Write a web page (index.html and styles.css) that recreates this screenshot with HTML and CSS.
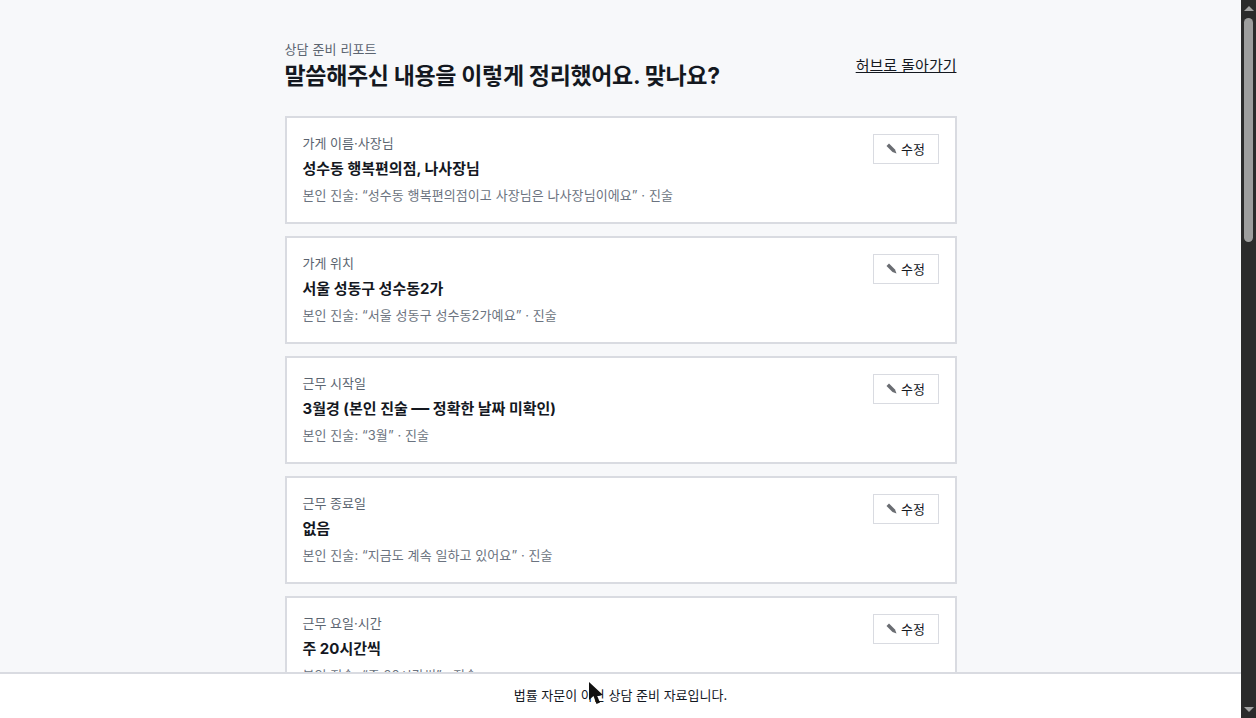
FILE: index.html
```html
<!DOCTYPE html>
<html lang="ko">
<head>
  <meta charset="UTF-8" />
  <meta name="viewport" content="width=device-width, initial-scale=1.0"/>
  <title>상담 준비 리포트</title>
  <link rel="stylesheet" href="styles.css">
</head>
<body>

  <svg width="0" height="0" class="defs">
    <symbol id="pencil" viewBox="0 0 11 11">
      <path d="M0.5 3 L3 0.5 L9 6.5 L10.5 10.5 L6.5 9 Z" fill="#6a6d72"/>
    </symbol>
  </svg>

  <div class="window">
    <div class="view">
      <main class="page">
        <header class="page-head">
          <div>
            <div class="eyebrow">상담 준비 리포트</div>
            <h1 class="title">말씀해주신 내용을 이렇게 정리했어요. 맞나요?</h1>
          </div>
          <a class="back-link" href="#">허브로 돌아가기</a>
        </header>

        <section class="card">
          <div class="card-body">
            <div class="card-label">가게 이름·사장님</div>
            <div class="card-value">성수동 행복편의점, 나사장님</div>
            <div class="card-source">본인 진술: “성수동 행복편의점이고 사장님은 나사장님이에요” · 진술</div>
          </div>
          <button type="button" class="btn-edit"><svg class="icon"><use href="#pencil"/></svg>수정</button>
        </section>

        <section class="card">
          <div class="card-body">
            <div class="card-label">가게 위치</div>
            <div class="card-value">서울 성동구 성수동2가</div>
            <div class="card-source">본인 진술: “서울 성동구 성수동2가예요” · 진술</div>
          </div>
          <button type="button" class="btn-edit"><svg class="icon"><use href="#pencil"/></svg>수정</button>
        </section>

        <section class="card">
          <div class="card-body">
            <div class="card-label">근무 시작일</div>
            <div class="card-value">3월경 (본인 진술 <span class="dash">—</span> 정확한 날짜 미확인)</div>
            <div class="card-source">본인 진술: “3월” · 진술</div>
          </div>
          <button type="button" class="btn-edit"><svg class="icon"><use href="#pencil"/></svg>수정</button>
        </section>

        <section class="card">
          <div class="card-body">
            <div class="card-label">근무 종료일</div>
            <div class="card-value">없음</div>
            <div class="card-source">본인 진술: “지금도 계속 일하고 있어요” · 진술</div>
          </div>
          <button type="button" class="btn-edit"><svg class="icon"><use href="#pencil"/></svg>수정</button>
        </section>

        <section class="card">
          <div class="card-body">
            <div class="card-label">근무 요일·시간</div>
            <div class="card-value">주 20시간씩</div>
            <div class="card-source">본인 진술: “주 20시간씩” · 진술</div>
          </div>
          <button type="button" class="btn-edit"><svg class="icon"><use href="#pencil"/></svg>수정</button>
        </section>
      </main>
    </div>

    <footer class="notice">법률 자문이 아닌 상담 준비 자료입니다.</footer>
  </div>

  <div class="scrollbar">
    <div class="arrow-up"></div>
    <div class="thumb"></div>
    <div class="arrow-down"></div>
  </div>

  <svg class="cursor" width="16" height="24" viewBox="0 0 16 24"><path d="M1 0 L1 18 L5.5 14 L8.5 22 L12 20.5 L9 13.5 L15 13 Z" fill="#111"/></svg>

</body>
</html>
```

FILE: styles.css
```css
body {
  margin: 0;
  height: 100vh;
  display: flex;
  overflow: hidden;
  background: #f7f8fa;
  color: #14181f;
  font-family: Inter, "Noto Sans CJK KR", sans-serif;
}

.defs {
  position: absolute;
}

.window {
  flex: 1;
  min-width: 0;
  display: flex;
  flex-direction: column;
}

.view {
  flex: 1;
  min-height: 0;
  overflow: hidden;
}

.page {
  max-width: 672px;
  margin: 0 auto;
  padding-top: 40px;
}

.page-head {
  display: flex;
  justify-content: space-between;
  align-items: center;
  margin-bottom: 24px;
}

.eyebrow {
  margin-bottom: 2px;
  font-size: 13px;
  line-height: 18px;
  letter-spacing: 0.01em;
  color: #5b6470;
}

.title {
  margin: 0;
  font-size: 23px;
  line-height: 32px;
  font-weight: 700;
  letter-spacing: -0.34px;
}

.back-link {
  margin-bottom: 4px;
  font-size: 15px;
  color: #14181f;
}

.card {
  display: flex;
  justify-content: space-between;
  align-items: flex-start;
  box-sizing: border-box;
  height: 108px;
  margin-bottom: 12px;
  padding: 16px;
  background: #fff;
  border: 2px solid #d9dbe1;
}

.card-label {
  margin-bottom: 2px;
  font-size: 13px;
  line-height: 18px;
  color: #5b6470;
}

.card-value {
  margin-top: 6px;
  font-size: 15px;
  line-height: 22px;
  font-weight: 700;
}

.dash {
  font-size: 18px;
  line-height: 0;
}

.card-source {
  margin-top: 5px;
  font-size: 13px;
  line-height: 20px;
  letter-spacing: 0.08px;
  color: #6b7380;
}

.btn-edit {
  display: flex;
  justify-content: center;
  align-items: center;
  gap: 4px;
  width: 66px;
  height: 30px;
  padding: 0 0 2px;
  background: #fff;
  color: #14181f;
  border: 1px solid #d9dbe1;
  font-family: inherit;
  font-size: 13px;
}

.icon {
  width: 11px;
  height: 11px;
}

.notice {
  flex: none;
  height: 44px;
  line-height: 42px;
  background: #fff;
  border-top: 2px solid #d9dbe1;
  text-align: center;
  font-size: 13px;
  color: #14181f;
}

.scrollbar {
  flex: none;
  width: 15px;
  display: flex;
  flex-direction: column;
  align-items: center;
  background: #2b2b2b;
}

.arrow-up {
  margin-top: 6px;
  border: 5px solid transparent;
  border-top: 0;
  border-bottom: 5px solid #a3a3a3;
}

.thumb {
  width: 9px;
  height: 224px;
  margin-top: 7px;
  border-radius: 5px;
  background: #9e9e9e;
}

.arrow-down {
  margin-top: auto;
  margin-bottom: 6px;
  border: 5px solid transparent;
  border-bottom: 0;
  border-top: 5px solid #a3a3a3;
}

.cursor {
  position: fixed;
  left: 588px;
  top: 682px;
}
```
